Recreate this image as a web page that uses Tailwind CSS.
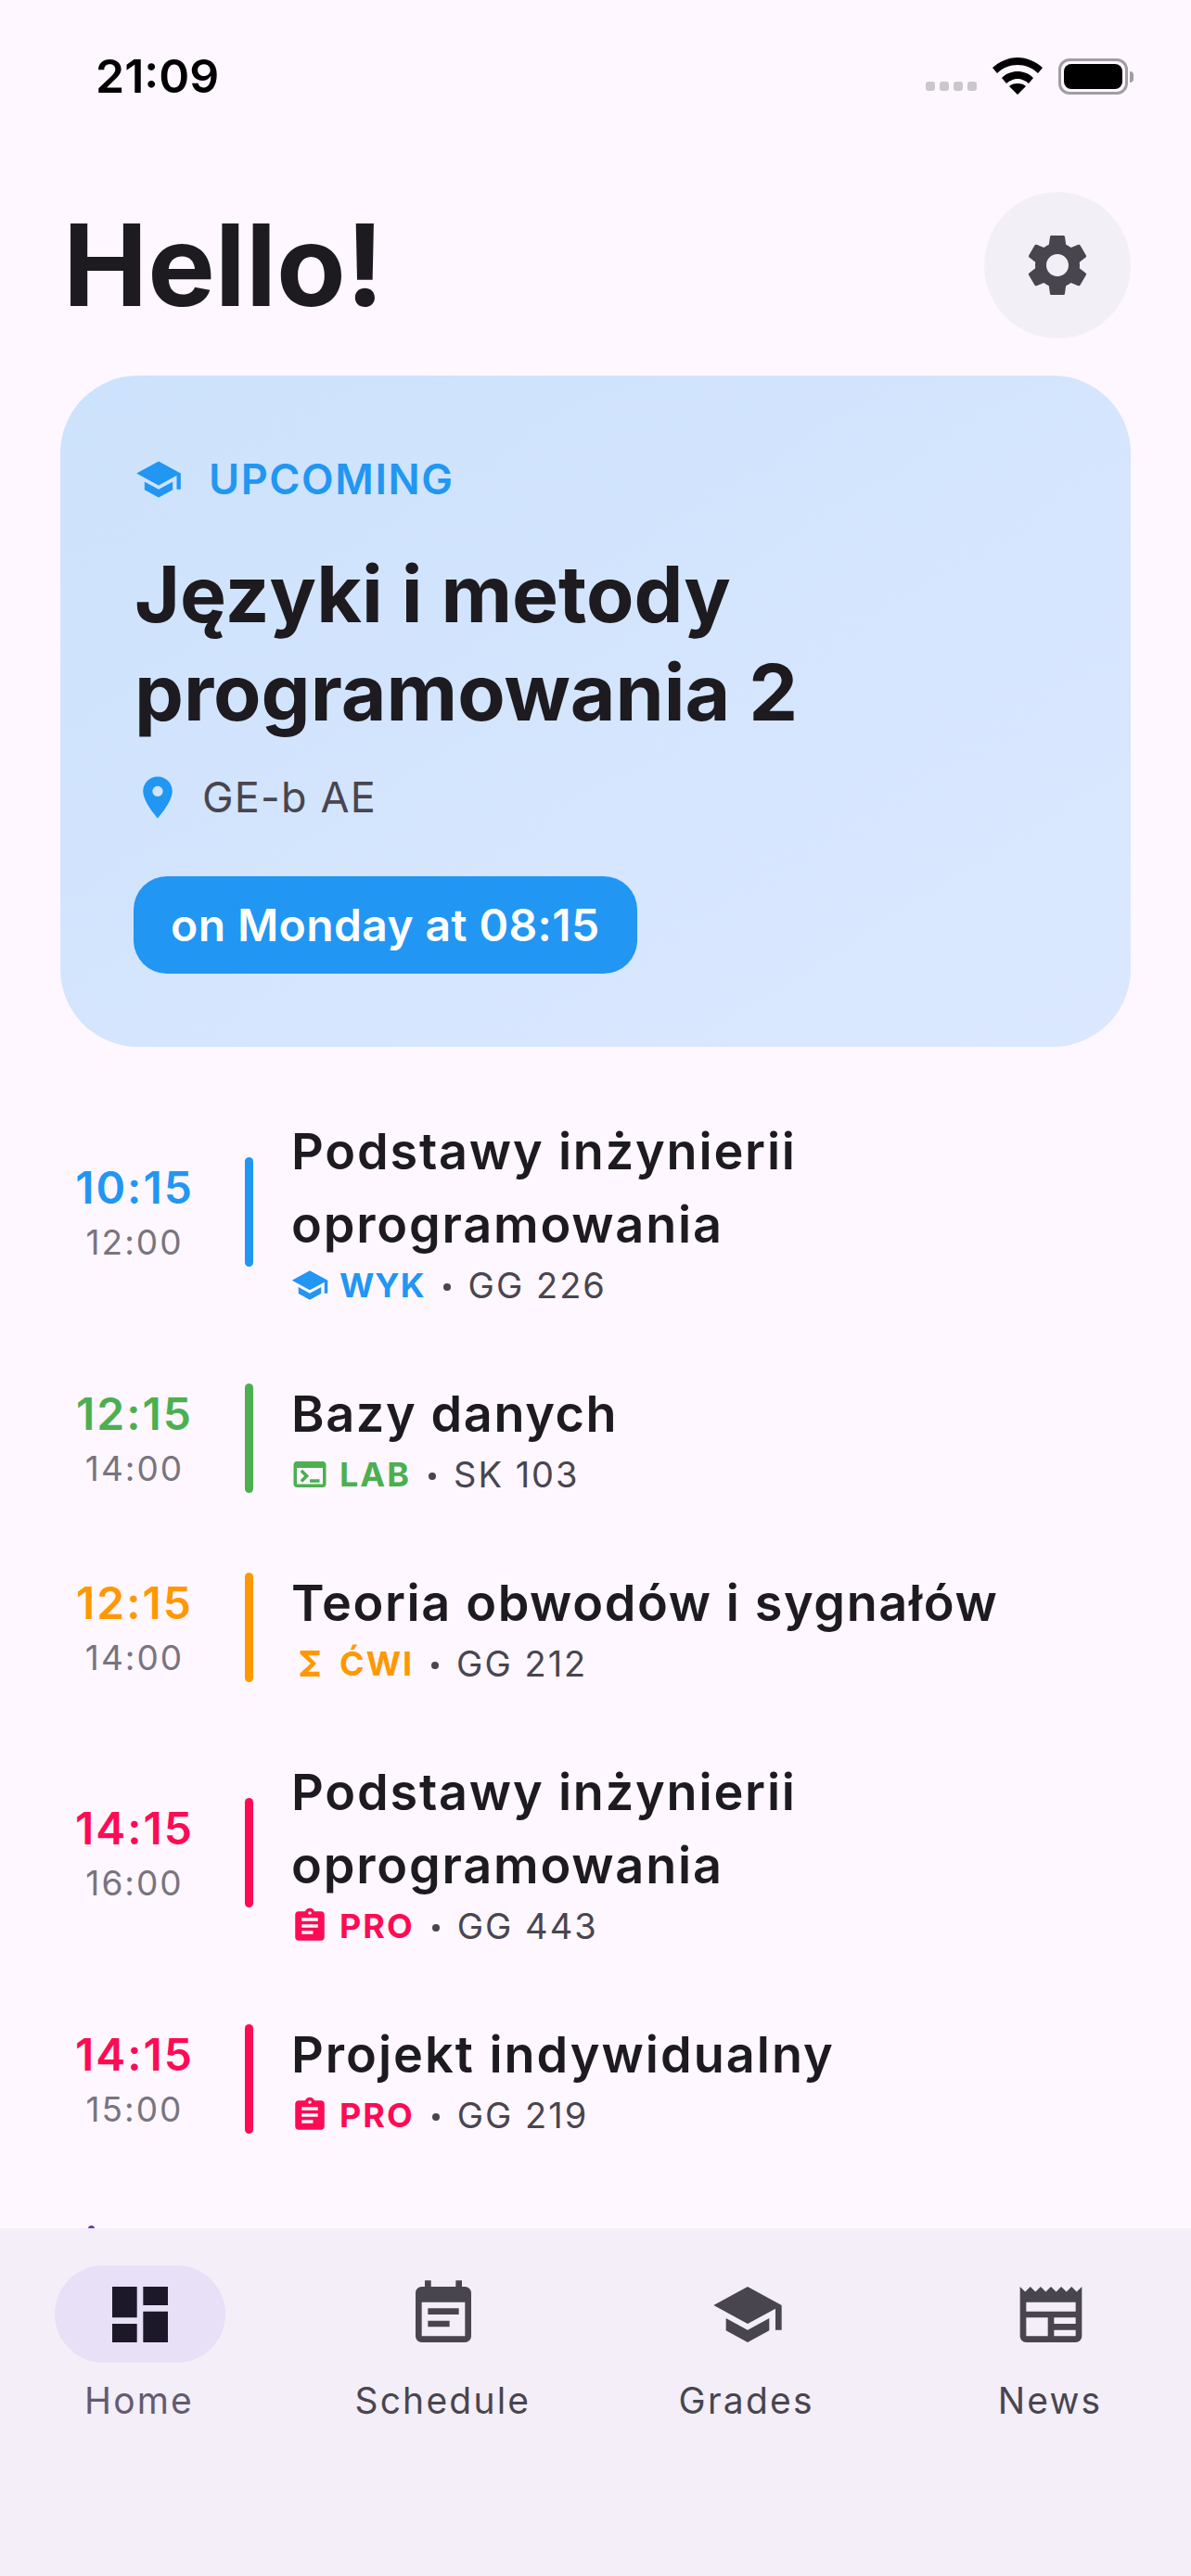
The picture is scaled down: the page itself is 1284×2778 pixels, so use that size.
<!DOCTYPE html>
<html lang="en">
<head>
  <meta charset="UTF-8" />
  <title>Home</title>
  <script src="https://cdn.jsdelivr.net/npm/@tailwindcss/browser@4"></script>
</head>
<body class="bg-[#fef7ff] font-['Inter',sans-serif] text-[#1d1b20]">
  <div class="relative w-[1284px] h-[2778px] overflow-hidden flex flex-col">

    <!-- Status bar -->
    <div class="h-[207px] shrink-0 flex items-start justify-between pl-[103px] pr-[62px] pt-[52px]">
      <span class="text-[50px] leading-[60px] font-semibold text-black">21:09</span>
      <div class="flex items-end pt-[10px] gap-[17px]">
        <div class="flex gap-[5px] pb-[4px]">
          <span class="w-[10px] h-[10px] rounded-[3px] bg-[#c9c6cc]"></span>
          <span class="w-[10px] h-[10px] rounded-[3px] bg-[#c9c6cc]"></span>
          <span class="w-[10px] h-[10px] rounded-[3px] bg-[#c9c6cc]"></span>
          <span class="w-[10px] h-[10px] rounded-[3px] bg-[#c9c6cc]"></span>
        </div>
        <svg class="w-[54px] h-[40px]" viewBox="0 0 54 40"><path d="M27 0C17 0 8 4 0 11l5 6c6-6 14-9 22-9s16 3 22 9l5-6C46 4 37 0 27 0zM10 22l5 6c3-3 8-5 12-5s9 2 12 5l5-6c-5-5-11-7-17-7s-12 2-17 7zM18 31l9 9 9-9c-2-2-5-3-9-3s-7 1-9 3z" fill="#000"/></svg>
        <div class="flex items-center gap-[2px]">
          <div class="w-[75px] h-[39px] rounded-[12px] border-[3px] border-[#a09da3] p-[3px]">
            <div class="w-full h-full rounded-[8px] bg-black"></div>
          </div>
          <span class="w-[4px] h-[12px] rounded-r-[4px] bg-[#a09da3]"></span>
        </div>
      </div>
    </div>

    <!-- Header -->
    <div class="shrink-0 flex items-center justify-between pl-[68px] pr-[65px] h-[158px]">
      <h1 class="text-[122px] leading-[158px] font-bold">Hello!</h1>
      <div class="w-[158px] h-[158px] rounded-full bg-[#f3eff6] flex items-center justify-center">
        <svg class="w-[80px] h-[80px]" viewBox="0 0 24 24" fill="#49454f"><path d="M19.14 12.94c.04-.3.06-.61.06-.94 0-.32-.02-.64-.07-.94l2.03-1.58c.18-.14.23-.41.12-.61l-1.92-3.32c-.12-.22-.37-.29-.59-.22l-2.39.96c-.5-.38-1.03-.7-1.62-.94l-.36-2.54c-.04-.24-.24-.41-.48-.41h-3.84c-.24 0-.43.17-.47.41l-.36 2.54c-.59.24-1.13.57-1.62.94l-2.39-.96c-.22-.08-.47 0-.59.22L2.74 8.87c-.12.21-.08.47.12.61l2.03 1.58c-.05.3-.09.63-.09.94s.02.64.07.94l-2.03 1.58c-.18.14-.23.41-.12.61l1.92 3.32c.12.22.37.29.59.22l2.39-.96c.5.38 1.03.7 1.62.94l.36 2.54c.05.24.24.41.48.41h3.84c.24 0 .44-.17.47-.41l.36-2.54c.59-.24 1.13-.56 1.62-.94l2.39.96c.22.08.47 0 .59-.22l1.92-3.32c.12-.22.07-.47-.12-.61l-2.01-1.58zM12 15.6c-1.98 0-3.6-1.62-3.6-3.6s1.62-3.6 3.6-3.6 3.6 1.62 3.6 3.6-1.62 3.6-3.6 3.6z"/></svg>
      </div>
    </div>

    <!-- Upcoming card -->
    <div class="shrink-0 mt-[40px] mx-[65px] h-[724px] rounded-[84px] bg-gradient-to-br from-[#cde2fc] to-[#dbe8ff] pl-[80px] pt-[86px]">
      <div class="flex items-center gap-[28px] h-[52px]">
        <svg class="w-[52px] h-[52px]" viewBox="0 0 24 24" fill="#2196f3"><path d="M5 13.18v4L12 21l7-3.82v-4L12 17l-7-3.82zM12 3L1 9l11 6 9-4.91V17h2V9L12 3z"/></svg>
        <span class="text-[45px] leading-[52px] font-semibold tracking-[1.6px] text-[#2196f3]">UPCOMING</span>
      </div>
      <h2 class="mt-[45px] text-[84px] leading-[106px] font-bold">Języki i metody<br>programowania 2</h2>
      <div class="mt-[33px] flex items-center gap-[21px] h-[54px]">
        <svg class="w-[54px] h-[54px] -ml-[2px]" viewBox="0 0 24 24" fill="#2196f3"><path d="M12 2C8.13 2 5 5.13 5 9c0 5.25 7 13 7 13s7-7.75 7-13c0-3.87-3.13-7-7-7zm0 9.5c-1.38 0-2.5-1.12-2.5-2.5s1.12-2.5 2.5-2.5 2.5 1.12 2.5 2.5-1.12 2.5-2.5 2.5z"/></svg>
        <span class="text-[45px] leading-[54px] tracking-[1.2px] text-[#49454f]">GE-b AE</span>
      </div>
      <div class="mt-[58px] -ml-[1px] inline-flex items-center h-[105px] px-[40px] rounded-[36px] bg-[#2196f3] text-white text-[48px] font-semibold tracking-[0.4px]">on Monday at 08:15</div>
    </div>

    <!-- Class list -->
    <div class="mt-[73px] flex flex-col gap-[73px]">

      <div class="flex items-center">
        <div class="w-[264px] pl-[26px] shrink-0 text-center">
          <div class="text-[48px] leading-[59px] font-semibold tracking-[2px] text-[#2196f3] pt-[6px]">10:15</div>
          <div class="text-[37px] leading-[59px] tracking-[2px] text-[#79747e]">12:00</div>
        </div>
        <div class="w-[9px] h-[118px] rounded-full bg-[#2196f3] shrink-0"></div>
        <div class="pl-[41px]">
          <div class="text-[54px] leading-[79px] font-semibold tracking-[1.8px]">Podstawy inżynierii<br>oprogramowania</div>
          <div class="flex items-center h-[52px] text-[38px] tracking-[2px] text-[#49454f]">
            <svg class="w-[42px] h-[42px] mr-[11px] -ml-[1px]" viewBox="0 0 24 24" fill="#2196f3"><path d="M5 13.18v4L12 21l7-3.82v-4L12 17l-7-3.82zM12 3L1 9l11 6 9-4.91V17h2V9L12 3z"/></svg>
            <span class="text-[36px] font-bold tracking-[1px] text-[#2196f3]">WYK</span><span class="w-[8px] h-[8px] ml-[19px] mr-[19px] translate-y-[2px] rounded-full bg-[#49454f]"></span><span>GG 226</span>
          </div>
        </div>
      </div>

      <div class="flex items-center">
        <div class="w-[264px] pl-[26px] shrink-0 text-center">
          <div class="text-[48px] leading-[59px] font-semibold tracking-[2px] text-[#4caf50] pt-[6px]">12:15</div>
          <div class="text-[37px] leading-[59px] tracking-[2px] text-[#79747e]">14:00</div>
        </div>
        <div class="w-[9px] h-[118px] rounded-full bg-[#4caf50] shrink-0"></div>
        <div class="pl-[41px]">
          <div class="text-[54px] leading-[79px] font-semibold tracking-[1.6px]">Bazy danych</div>
          <div class="flex items-center h-[52px] text-[38px] tracking-[2px] text-[#49454f]">
            <svg class="w-[42px] h-[42px] mr-[11px] -ml-[1px]" viewBox="0 0 24 24" fill="#4caf50"><path d="M20 4H4c-1.11 0-2 .9-2 2v12c0 1.1.89 2 2 2h16c1.1 0 2-.9 2-2V6c0-1.1-.9-2-2-2zm0 14H4V8h16v10zm-2-1h-6v-2h6v2zM7.5 17l-1.41-1.41L8.67 13l-2.59-2.59L7.5 9l4 4-4 4z"/></svg>
            <span class="text-[36px] font-bold text-[#4caf50]">LAB</span><span class="w-[8px] h-[8px] ml-[19px] mr-[19px] translate-y-[2px] rounded-full bg-[#49454f]"></span><span>SK 103</span>
          </div>
        </div>
      </div>

      <div class="flex items-center">
        <div class="w-[264px] pl-[26px] shrink-0 text-center">
          <div class="text-[48px] leading-[59px] font-semibold tracking-[2px] text-[#ff9800] pt-[6px]">12:15</div>
          <div class="text-[37px] leading-[59px] tracking-[2px] text-[#79747e]">14:00</div>
        </div>
        <div class="w-[9px] h-[118px] rounded-full bg-[#ff9800] shrink-0"></div>
        <div class="pl-[41px]">
          <div class="text-[54px] leading-[79px] font-semibold tracking-[1.6px]">Teoria obwodów i sygnałów</div>
          <div class="flex items-center h-[52px] text-[38px] tracking-[2px] text-[#49454f]">
            <svg class="w-[42px] h-[42px] mr-[11px] -ml-[1px]" viewBox="0 0 24 24" fill="#ff9800"><path d="M18 4H6v2l6.5 6L6 18v2h12v-3h-7l5-5-5-5h7z"/></svg>
            <span class="text-[36px] font-bold text-[#ff9800]">ĆWI</span><span class="w-[8px] h-[8px] ml-[19px] mr-[19px] translate-y-[2px] rounded-full bg-[#49454f]"></span><span>GG 212</span>
          </div>
        </div>
      </div>

      <div class="flex items-center">
        <div class="w-[264px] pl-[26px] shrink-0 text-center">
          <div class="text-[48px] leading-[59px] font-semibold tracking-[2px] text-[#ff0a54] pt-[6px]">14:15</div>
          <div class="text-[37px] leading-[59px] tracking-[2px] text-[#79747e]">16:00</div>
        </div>
        <div class="w-[9px] h-[118px] rounded-full bg-[#ff0a54] shrink-0"></div>
        <div class="pl-[41px]">
          <div class="text-[54px] leading-[79px] font-semibold tracking-[1.8px]">Podstawy inżynierii<br>oprogramowania</div>
          <div class="flex items-center h-[52px] text-[38px] tracking-[2px] text-[#49454f]">
            <svg class="w-[42px] h-[42px] mr-[11px] -ml-[1px]" viewBox="0 0 24 24" fill="#ff0a54"><path d="M19 3h-4.18C14.4 1.84 13.3 1 12 1c-1.3 0-2.4.84-2.82 2H5c-1.1 0-2 .9-2 2v14c0 1.1.9 2 2 2h14c1.1 0 2-.9 2-2V5c0-1.1-.9-2-2-2zm-7 0c.55 0 1 .45 1 1s-.45 1-1 1-1-.45-1-1 .45-1 1-1zm2 14H7v-2h7v2zm3-4H7v-2h10v2zm0-4H7V7h10v2z"/></svg>
            <span class="text-[36px] font-bold text-[#ff0a54]">PRO</span><span class="w-[8px] h-[8px] ml-[19px] mr-[19px] translate-y-[2px] rounded-full bg-[#49454f]"></span><span>GG 443</span>
          </div>
        </div>
      </div>

      <div class="flex items-center">
        <div class="w-[264px] pl-[26px] shrink-0 text-center">
          <div class="text-[48px] leading-[59px] font-semibold tracking-[2px] text-[#ff0a54] pt-[6px]">14:15</div>
          <div class="text-[37px] leading-[59px] tracking-[2px] text-[#79747e]">15:00</div>
        </div>
        <div class="w-[9px] h-[118px] rounded-full bg-[#ff0a54] shrink-0"></div>
        <div class="pl-[41px]">
          <div class="text-[54px] leading-[79px] font-semibold tracking-[2px]">Projekt indywidualny</div>
          <div class="flex items-center h-[52px] text-[38px] tracking-[2px] text-[#49454f]">
            <svg class="w-[42px] h-[42px] mr-[11px] -ml-[1px]" viewBox="0 0 24 24" fill="#ff0a54"><path d="M19 3h-4.18C14.4 1.84 13.3 1 12 1c-1.3 0-2.4.84-2.82 2H5c-1.1 0-2 .9-2 2v14c0 1.1.9 2 2 2h14c1.1 0 2-.9 2-2V5c0-1.1-.9-2-2-2zm-7 0c.55 0 1 .45 1 1s-.45 1-1 1-1-.45-1-1 .45-1 1-1zm2 14H7v-2h7v2zm3-4H7v-2h10v2zm0-4H7V7h10v2z"/></svg>
            <span class="text-[36px] font-bold text-[#ff0a54]">PRO</span><span class="w-[8px] h-[8px] ml-[19px] mr-[19px] translate-y-[2px] rounded-full bg-[#49454f]"></span><span>GG 219</span>
          </div>
        </div>
      </div>
    </div>

    <!-- Tip of the next list item, cut off by the nav bar -->
    <div class="absolute left-[95px] top-[2400px] w-[7px] h-[4px] rounded-t-full bg-[#673ab7]"></div>

    <!-- Bottom nav -->
    <nav class="absolute left-0 right-0 bottom-0 h-[375px] bg-[#f3eef8] flex justify-between px-[59px] pt-[40px]">
      <div class="w-[184px] flex flex-col items-center">
        <div class="w-[184px] h-[105px] rounded-full bg-[#e8e0f6] flex items-center justify-center">
          <svg class="w-[80px] h-[80px]" viewBox="0 0 24 24" fill="#1d1829"><path d="M3 13h8V3H3v10zm0 8h8v-6H3v6zm10 0h8V11h-8v10zm0-18v6h8V3h-8z"/></svg>
        </div>
        <span class="mt-[15px] -ml-[2px] text-[39px] leading-[52px] tracking-[2.2px] text-[#625b71] whitespace-nowrap">Home</span>
      </div>
      <div class="w-[184px] flex flex-col items-center">
        <div class="w-[184px] h-[105px] flex items-center justify-center">
          <svg class="w-[80px] h-[80px]" viewBox="0 0 24 24" fill="#49454f"><path d="M17 10H7v2h10v-2zm2-7h-1V1h-2v2H8V1H6v2H5c-1.11 0-1.99.9-1.99 2L3 19c0 1.1.89 2 2 2h14c1.1 0 2-.9 2-2V5c0-1.1-.9-2-2-2zm0 16H5V8h14v11zm-5-5H7v2h7v-2z"/></svg>
        </div>
        <span class="mt-[15px] -ml-[2px] text-[39px] leading-[52px] tracking-[2.2px] text-[#49454f] whitespace-nowrap">Schedule</span>
      </div>
      <div class="w-[184px] flex flex-col items-center">
        <div class="w-[184px] h-[105px] flex items-center justify-center">
          <svg class="w-[80px] h-[80px]" viewBox="0 0 24 24" fill="#49454f"><path d="M5 13.18v4L12 21l7-3.82v-4L12 17l-7-3.82zM12 3L1 9l11 6 9-4.91V17h2V9L12 3z"/></svg>
        </div>
        <span class="mt-[15px] -ml-[2px] text-[39px] leading-[52px] tracking-[2.2px] text-[#49454f] whitespace-nowrap">Grades</span>
      </div>
      <div class="w-[184px] flex flex-col items-center">
        <div class="w-[184px] h-[105px] flex items-center justify-center">
          <svg class="w-[80px] h-[80px]" viewBox="0 0 24 24" fill="#49454f"><path d="M22 3l-1.67 1.67L18.67 3 17 4.67 15.33 3l-1.66 1.67L12 3l-1.67 1.67L8.67 3 7 4.67 5.33 3 3.67 4.67 2 3v16c0 1.1.9 2 2 2h16c1.1 0 2-.9 2-2V3zM11 19H4v-6h7v6zm9 0h-7v-2h7v2zm0-4h-7v-2h7v2zm0-4H4V8h16v3z"/></svg>
        </div>
        <span class="mt-[15px] -ml-[2px] text-[39px] leading-[52px] tracking-[2.2px] text-[#49454f] whitespace-nowrap">News</span>
      </div>
    </nav>
  </div>
</body>
</html>
